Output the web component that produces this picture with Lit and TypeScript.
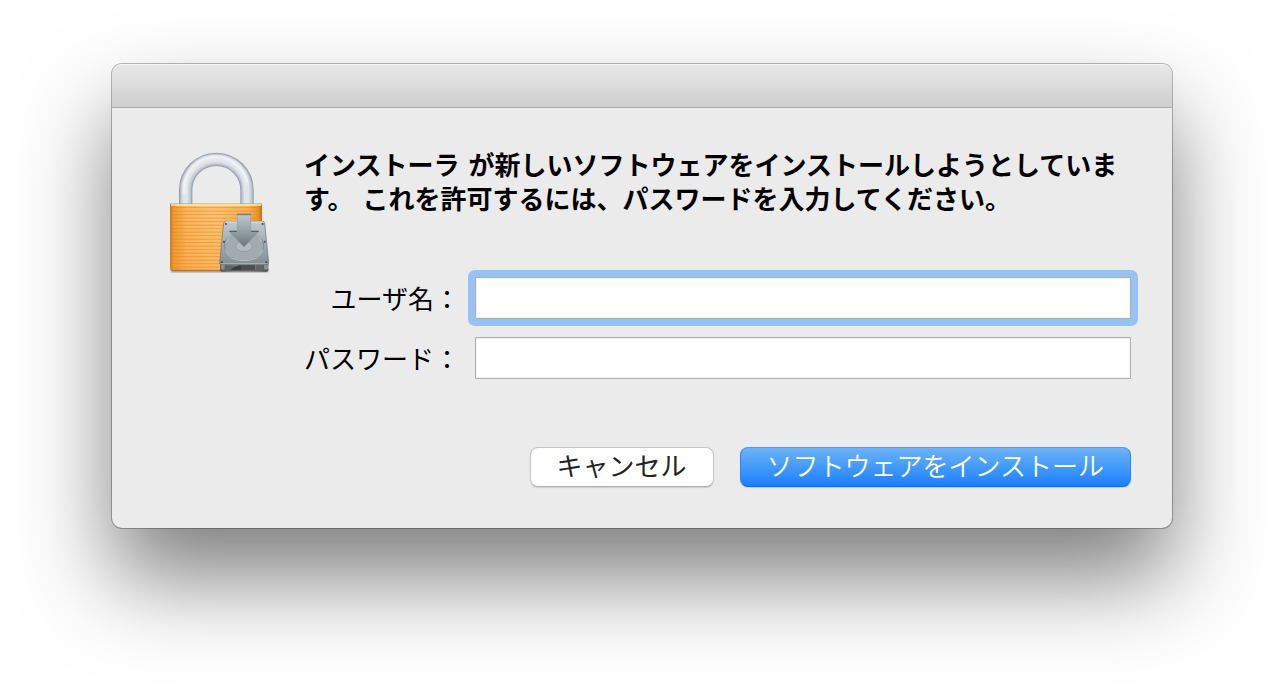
import { LitElement, html, svg, css } from "lit";
import { customElement, property } from "lit/decorators.js";

const stripes = Array.from({ length: 18 }, (_, i) => 202 + i * 10.5);

@customElement("lock-icon")
class LockIcon extends LitElement {
  static styles = css`
    :host {
      display: block;
    }
    svg {
      display: block;
      width: 103px;
      height: 125px;
    }
  `;

  render() {
    return html`
      <svg viewBox="39 26 309 375" role="img" aria-label="インストーラ">
        <defs>
          <linearGradient id="gold" x1="0" y1="0" x2="1" y2="0">
            <stop offset="0" stop-color="#c87518" />
            <stop offset="0.04" stop-color="#ee9c37" />
            <stop offset="0.18" stop-color="#fdb75e" />
            <stop offset="0.5" stop-color="#ffc676" />
            <stop offset="0.85" stop-color="#fab155" />
            <stop offset="0.96" stop-color="#e9932d" />
            <stop offset="1" stop-color="#bd6a12" />
          </linearGradient>
          <linearGradient id="goldShade" x1="0" y1="0" x2="0" y2="1">
            <stop offset="0" stop-color="#f09020" stop-opacity="0" />
            <stop offset="1" stop-color="#ef8e20" stop-opacity="0.25" />
          </linearGradient>
          <linearGradient id="plate" x1="0" y1="0" x2="0" y2="1">
            <stop offset="0" stop-color="#c0cace" />
            <stop offset="0.4" stop-color="#a9b3b7" />
            <stop offset="1" stop-color="#858d92" />
          </linearGradient>
          <linearGradient id="arrow" x1="0" y1="0" x2="0" y2="1">
            <stop offset="0" stop-color="#8d9a9f" />
            <stop offset="0.08" stop-color="#b8c5ca" />
            <stop offset="0.5" stop-color="#95a2a6" />
            <stop offset="1" stop-color="#6d777b" />
          </linearGradient>
          <linearGradient id="base" x1="0" y1="0" x2="1" y2="0">
            <stop offset="0" stop-color="#4d4f51" />
            <stop offset="0.3" stop-color="#858789" />
            <stop offset="0.7" stop-color="#77797b" />
            <stop offset="1" stop-color="#4a4c4e" />
          </linearGradient>
          <filter id="soft" x="-20%" y="-20%" width="140%" height="140%">
            <feGaussianBlur stdDeviation="3" />
          </filter>
        </defs>

        <rect x="48" y="386" width="292" height="10" rx="4" fill="#000" opacity="0.4" filter="url(#soft)" />

        <g fill="none">
          <path d="M92 192V149A92 92 0 0 1 276 149V192" stroke="#9299a5" stroke-width="40" />
          <path d="M92 192V149A92 92 0 0 1 276 149V192" stroke="#b3bac5" stroke-width="35" />
          <path d="M92 192V149A92 92 0 0 1 276 149V192" stroke="#ccd2da" stroke-width="28" />
          <path d="M91 192V149A92 92 0 0 1 275 149V192" stroke="#e1e5ea" stroke-width="17" />
          <path d="M88 160V146A95 95 0 0 1 277 130" stroke="#f5f7f9" stroke-width="8" filter="url(#soft)" />
        </g>

        <path d="M45 190H321V391H53Q45 391 45 383Z" fill="url(#gold)" />
        <path d="M45 190H321V391H53Q45 391 45 383Z" fill="url(#goldShade)" />
        ${stripes.map(
          (y) => svg`<path d=${`M47 ${y}H320`} stroke="#d98525" stroke-width="3" opacity="0.55" />`
        )}
        <path d="M46 191H320" stroke="#b9924a" stroke-width="2" />
        <path d="M48 194H319" stroke="#fff0ae" stroke-width="4" />
        <path d="M49 390H321" stroke="#b5671a" stroke-width="3" />

        <path d="M195 371H340V388Q340 394 334 394H201Q195 394 195 388Z" fill="url(#base)" />
        <path d="M211 376H325V391H222Q211 389 211 376Z" fill="#606264" />
        <path d="M226 390Q242 375 258 374V390Z" fill="#3c3e40" />
        <path d="M258 374H301V389H258Z" fill="#909294" />
        <path d="M261 374V389M267 374V389M273 374V389M279 374V389M285 374V389M291 374V389M297 374V389" stroke="#1b1c1d" stroke-width="3.4" />
        <path d="M197 374H209V386Q203 391 197 386ZM327 374H339V386Q333 391 327 386Z" fill="#8e9193" />

        <path d="M212 243H323Q328 243 329 248L341 366Q342 373 335 373H200Q193 373 194 366L206 248Q207 243 212 243Z" fill="url(#plate)" stroke="#697277" stroke-width="2" />
        <path d="M212 245H323" stroke="#dce4e6" stroke-width="3" />
        <path d="M197 370H338" stroke="#c3c9cb" stroke-width="2" />
        <ellipse cx="267" cy="316" rx="59" ry="45" fill="#a2acb0" stroke="#7d878b" stroke-width="2.5" />
        <path d="M212 330Q222 361 267 361Q312 361 323 329" fill="none" stroke="#c7d0d3" stroke-width="2.5" />
        <ellipse cx="267" cy="318" rx="25" ry="16" fill="#b1babe" stroke="#8b959a" stroke-width="2" />
        <path d="M216 303Q222 278 244 275M290 275Q314 280 319 304" fill="none" stroke="#ccd5d8" stroke-width="2" />
        <path d="M223 273H248M287 273H311" stroke="#566065" stroke-width="4" />
        <g fill="#42494d">
          <circle cx="213" cy="251" r="3" />
          <circle cx="323" cy="251" r="3" />
          <circle cx="207" cy="304" r="3" />
          <circle cx="329" cy="304" r="3" />
          <circle cx="201" cy="366" r="3" />
          <circle cx="334" cy="366" r="3" />
        </g>

        <path d="M246 220H288V275H311L267 320L223 275H246Z" fill="url(#arrow)" />
        <path d="M246 222H288" stroke="#758187" stroke-width="4" />
        <path d="M247 225V275M287 225V275" stroke="#93a0a5" stroke-width="2" />
      </svg>
    `;
  }
}

@customElement("login-field")
class LoginField extends LitElement {
  @property() label = "";
  @property() type = "text";
  @property({ type: Boolean }) active = false;

  static styles = css`
    :host {
      display: flex;
      align-items: center;
      gap: 8px;
    }
    .label {
      flex: none;
      width: 156px;
      text-align: right;
      white-space: nowrap;
      line-height: 34px;
    }
    .ring {
      flex: 1;
      display: flex;
      min-width: 0;
      padding: 7px;
      border-radius: 7px;
    }
    .ring.active {
      background: #97c3f3;
    }
    .input {
      box-sizing: border-box;
      width: 100%;
      height: 42px;
      margin: 0;
      padding: 0 8px;
      border: 1px solid #b0b0b0;
      border-radius: 0;
      outline: none;
      background: #fff;
      box-shadow: inset 0 0 0 1px #f3f3f3;
      color: #000;
      font: inherit;
    }
  `;

  render() {
    return html`
      <label class="label" for="entry">${this.label}</label>
      <span class="ring ${this.active ? "active" : ""}">
        <input class="input" id="entry" type=${this.type} />
      </span>
    `;
  }
}

@customElement("app-root")
class AppRoot extends LitElement {
  static styles = css`
    :host {
      display: block;
      box-sizing: border-box;
      min-height: 100vh;
      padding: 64px 112px 80px;
      overflow: hidden;
      background: #fff;
      color: #000;
      font-family: "Noto Sans CJK JP", "Liberation Sans", sans-serif;
      font-size: 26px;
    }
    .dialog {
      border-radius: 10px;
      background: #ebebeb;
      box-shadow:
        0 0 0 1px rgba(0, 0, 0, 0.27),
        0 50px 90px rgba(0, 0, 0, 0.5);
    }
    .titlebar {
      height: 43px;
      border-bottom: 1px solid #adadad;
      border-radius: 10px 10px 0 0;
      background: linear-gradient(#e9e8e9, #d0cfd0);
      box-shadow: inset 0 2px 0 -1px #f5f5f5;
    }
    .body {
      display: flex;
      align-items: flex-start;
      gap: 33px;
      padding: 41px 34px 41px 56px;
    }
    .icon {
      flex: none;
    }
    .content {
      flex: 1;
      min-width: 0;
    }
    .message {
      margin: 0 7px 53px 0;
      font-family: "DejaVu Sans", "Noto Sans CJK JP", sans-serif;
      font-size: 26px;
      font-weight: 700;
      line-height: 34px;
    }
    .fields {
      display: flex;
      flex-direction: column;
      gap: 4px;
    }
    .actions {
      display: flex;
      flex-wrap: wrap;
      justify-content: flex-end;
      gap: 26px;
      margin: 61px 7px 0 0;
    }
    .button {
      height: 40px;
      margin: 0;
      padding: 0 26px 4px;
      border: 1px solid #c6c6c6;
      border-bottom-color: #b0b0b0;
      border-radius: 8px;
      background: #fff;
      box-shadow: 0 1px 1px rgba(0, 0, 0, 0.12);
      color: #222;
      font: inherit;
      line-height: 34px;
      white-space: nowrap;
    }
    .primary {
      border-color: #4a9bf5 #2c86f7 #0f68f0;
      background: linear-gradient(#6db3f8, #1a80fd);
      color: #fff;
      font-weight: 350;
    }
  `;

  render() {
    return html`
      <form
        class="dialog"
        role="dialog"
        aria-labelledby="message"
        @submit=${(e: Event) => e.preventDefault()}
      >
        <header class="titlebar"></header>
        <div class="body">
          <lock-icon class="icon"></lock-icon>
          <div class="content">
            <h1 class="message" id="message">インストーラ が新しいソフトウェアをインストールしようとしています。 これを許可するには、パスワードを入力してください。</h1>
            <div class="fields">
              <login-field label="ユーザ名：" active></login-field>
              <login-field label="パスワード：" type="password"></login-field>
            </div>
            <div class="actions">
              <button class="button" type="button">キャンセル</button>
              <button class="button primary" type="submit">ソフトウェアをインストール</button>
            </div>
          </div>
        </div>
      </form>
    `;
  }
}
